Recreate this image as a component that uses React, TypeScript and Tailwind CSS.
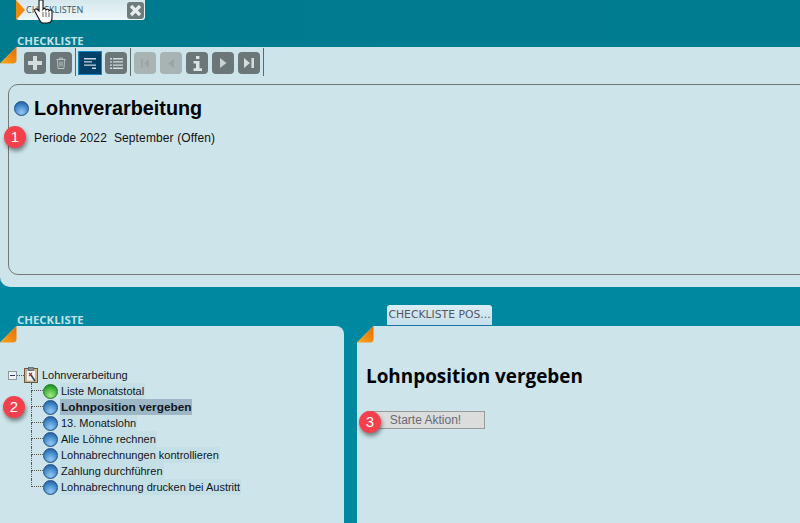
import type { ReactNode } from 'react';

const treeItems = [
  { label: 'Liste Monatstotal', color: 'green' },
  { label: 'Lohnposition vergeben', color: 'blue', selected: true },
  { label: '13. Monatslohn', color: 'blue' },
  { label: 'Alle Löhne rechnen', color: 'blue' },
  { label: 'Lohnabrechnungen kontrollieren', color: 'blue' },
  { label: 'Zahlung durchführen', color: 'blue' },
  { label: 'Lohnabrechnung drucken bei Austritt', color: 'blue' },
];

function Corner({ fold }: { fold: string }) {
  return (
    <svg className="absolute left-0 top-0" width="17" height="17" viewBox="0 0 17 17">
      <defs>
        <linearGradient id="cornerFill" x1="0" y1="1" x2="1" y2="0">
          <stop offset="0" stopColor="#f9a81f" />
          <stop offset="1" stopColor="#e86a00" />
        </linearGradient>
      </defs>
      <path d="M0 0 L16.5 0 L0 16.5 Z" fill={fold} />
      <path d="M16.5 0 L16.5 13 Q16.5 16.5 13 16.5 L0 16.5 Z" fill="url(#cornerFill)" />
    </svg>
  );
}

function Badge({ n, className }: { n: number; className: string }) {
  return (
    <div
      className={`absolute flex h-[22px] w-[22px] items-center justify-center rounded-full bg-[#f4404c] text-[15px] text-white shadow-[1px_3px_4px_rgba(0,0,0,0.45)] ${className}`}
    >
      {n}
    </div>
  );
}

function Globe({ color, size = 15 }: { color: string; size?: number }) {
  const cls =
    color === 'green'
      ? 'border-[#1f7a26] bg-[radial-gradient(circle_at_50%_80%,#a0ec84,#35ab35_65%,#187524)]'
      : 'border-[#1f4f84] bg-[radial-gradient(circle_at_50%_80%,#92c9f5,#3c82c6_62%,#1b4e8e)]';
  return <div className={`shrink-0 rounded-full border ${cls}`} style={{ width: size, height: size }} />;
}

function ToolButton({ children, disabled }: { children: ReactNode; disabled?: boolean }) {
  const tone = disabled ? 'bg-[#a8b3b4]' : 'bg-[#6a7677]';
  return <div className={`flex h-[22px] w-[22px] items-center justify-center rounded-[4px] ${tone}`}>{children}</div>;
}

function Separator() {
  return <div className="h-[28px] w-px bg-[#5d6a6c]" />;
}

function Toolbar() {
  return (
    <div className="flex h-[30px] items-center pl-[24px]">
      <div className="mt-[2px] flex gap-[4px]">
        <ToolButton>
          <svg width="16" height="16" viewBox="0 0 16 16"><path d="M6 1h4v5h5v4h-5v5H6v-5H1V6h5z" fill="#d4dcdc" /></svg>
        </ToolButton>
        <ToolButton>
          <svg width="10" height="12" viewBox="0 0 10 12" fill="none" stroke="#b9c3c3" strokeWidth="1">
            <path d="M0.5 2.5h9M3.5 2.5V1h3v1.5M1.5 2.5l.5 9h6l.5-9M4 4.5v5M6 4.5v5" />
          </svg>
        </ToolButton>
      </div>
      <div className="ml-[3px] mr-[2px]"><Separator /></div>
      <div className="mt-[2px] flex items-center gap-[3px]">
        <div className="flex h-[24px] w-[24px] items-center justify-center border border-[#0f86c4] bg-[#003f66]">
          <svg width="13" height="13" viewBox="0 0 13 13" fill="#c9d8de">
            <path d="M0 1h12v1.4H0zM0 4.2h8v1.4H0zM0 7.4h12v1.4H0zM8 10.6h4V12H8z" />
          </svg>
        </div>
        <ToolButton>
          <svg width="13" height="13" viewBox="0 0 13 13" fill="#d4dcdc">
            <path d="M0 1h2v1.4H0zM3 1h10v1.4H3zM0 4.2h2v1.4H0zM3 4.2h10v1.4H3zM0 7.4h2v1.4H0zM3 7.4h10v1.4H3zM0 10.6h2V12H0zM3 10.6h10V12H3z" />
          </svg>
        </ToolButton>
      </div>
      <div className="ml-[3px] mr-[3px]"><Separator /></div>
      <div className="mt-[2px] flex gap-[4px]">
        <ToolButton disabled>
          <svg width="8" height="9" viewBox="0 0 8 9" fill="#9aa5a6"><path d="M0 0h1.6v9H0zM8 0v9L3 4.5z" /></svg>
        </ToolButton>
        <ToolButton disabled>
          <svg width="6" height="9" viewBox="0 0 6 9" fill="#9aa5a6"><path d="M6 0v9L0 4.5z" /></svg>
        </ToolButton>
        <ToolButton>
          <svg width="11" height="15" viewBox="0 0 11 15" fill="#dde3e3"><path d="M4 0h3.4v3H4zM1.5 5h6v7.2H10V15H1.5v-2.8H4V7.6H1.5z" /></svg>
        </ToolButton>
        <ToolButton>
          <svg width="8" height="10" viewBox="0 0 8 10" fill="#c9d1d1"><path d="M1 0l6.5 5L1 10z" /></svg>
        </ToolButton>
        <ToolButton>
          <svg width="10" height="10" viewBox="0 0 10 10" fill="#d4dcdc"><path d="M0 0l6 5-6 5zM7.4 0H10v10H7.4z" /></svg>
        </ToolButton>
      </div>
      <div className="ml-[3px]"><Separator /></div>
    </div>
  );
}

function SectionLabel({ className = '' }: { className?: string }) {
  return (
    <div className={`pl-[17px] font-['Open_Sans',sans-serif] text-[11.4px] font-bold leading-[12px] text-[#bfe2ea] ${className}`}>
      CHECKLISTE
    </div>
  );
}

function ClipboardIcon() {
  return (
    <svg width="14" height="16" viewBox="0 0 14 16">
      <rect x="0.5" y="1.5" width="13" height="14" fill="#c9b48c" stroke="#6d5a3a" />
      <rect x="2.5" y="3.5" width="9" height="10.5" fill="#f5f3ee" stroke="#9a9a9a" strokeWidth="0.5" />
      <rect x="4.5" y="0.5" width="5" height="3" fill="#8a8f96" stroke="#4c4f55" strokeWidth="0.6" />
      <path d="M5 6l3 3M8 6l-3 3" stroke="#c0262c" strokeWidth="1.1" />
      <path d="M7 8l4 6" stroke="#3b4250" strokeWidth="1.6" />
    </svg>
  );
}

function TreeRow({ label, color, selected, last }: { label: string; color: string; selected?: boolean; last?: boolean }) {
  return (
    <div className="flex h-4 items-center pl-[31px]">
      <div className="flex h-full w-[12px] shrink-0 flex-col">
        <div className="h-[8px] border-b border-l border-dotted border-[#555]" />
        {!last && <div className="h-[8px] border-l border-dotted border-[#555]" />}
      </div>
      <Globe color={color} />
      <span
        className={`ml-[2px] whitespace-nowrap px-[1px] leading-[16px] text-[#10141c] ${
          selected ? 'bg-[#9db7c6] text-[11.8px] font-bold' : 'bg-[#c4e0e6] text-[11px]'
        }`}
      >
        {label}
      </span>
    </div>
  );
}

export default function App() {
  return (
    <div className="relative flex h-[523px] w-[800px] flex-col overflow-hidden bg-[#0088a0] font-['Liberation_Sans',sans-serif]">
      {/* Top band with tab */}
      <div className="h-[47px] bg-gradient-to-r from-[#007a8d] to-[#007c91]">
        <div className="relative ml-[16px] flex h-[20px] w-[129px] items-center rounded-b-[3px] bg-gradient-to-b from-[#d5e8ed] to-[#eef6f8] pl-[10px]">
          <div className="absolute left-0 top-0 h-0 w-0 border-y-[10px] border-l-[9px] border-y-transparent border-l-[#f08a0c]" />
          <span className="font-['Open_Sans',sans-serif] text-[9px] text-[#33586a]">CHECKLISTEN</span>
          <div className="ml-auto mr-[1px] flex h-[17px] w-[17px] items-center justify-center rounded-[3px] bg-[#6f7c7e]">
            <svg width="13" height="13" viewBox="0 0 13 13" stroke="#e7ecec" strokeWidth="3.2"><path d="M2 2l9 9M11 2l-9 9" /></svg>
          </div>
        </div>
        <SectionLabel className="mt-[15px]" />
      </div>

      {/* Top panel */}
      <div className="relative h-[240px] rounded-bl-[10px] bg-[#cde5ea]">
        <Corner fold="#007a8d" />
        <Toolbar />
        <div className="ml-[8px] mr-[-12px] mt-[7px] h-[191px] rounded-[10px] border border-[#777]">
          <div className="flex items-center gap-[5px] pl-[5px] pt-[12px]">
            <Globe color="blue" />
            <h1 className="text-[19.8px] font-bold leading-[23px] text-black">Lohnverarbeitung</h1>
          </div>
          <p className="whitespace-pre pl-[25px] pt-[11px] text-[12px] leading-[14px] tracking-[0.13px] text-[#111]">
            Periode 2022  September (Offen)
          </p>
        </div>
      </div>

      {/* Lower tab row */}
      <div className="flex h-[39px] items-end">
        <div className="w-[357px]"><SectionLabel /></div>
        <div className="ml-[30px] flex h-[21px] w-[105px] items-center justify-center whitespace-nowrap rounded-t-[3px] border-b border-[#1576a8] bg-gradient-to-b from-[#d9edf5] to-[#c6dfeb] font-['DejaVu_Sans',sans-serif] text-[10.8px] text-[#55565f]">
          CHECKLISTE POS...
        </div>
      </div>

      {/* Lower panels */}
      <div className="flex h-[197px] gap-[13px]">
        <div className="relative w-[344px] rounded-tr-[8px] bg-[#cde5ea] pt-[41px]">
          <Corner fold="#0088a0" />
          <div className="flex h-4 items-center pl-[8px]">
            <div className="flex h-[9px] w-[9px] items-center justify-center border border-[#8a96a0] bg-[#eef2f6]">
              <div className="h-px w-[5px] bg-[#333a66]" />
            </div>
            <div className="h-0 w-[7px] border-t border-dotted border-[#555]" />
            <ClipboardIcon />
            <span className="ml-[4px] text-[11px] leading-[16px] text-[#10141c]">Lohnverarbeitung</span>
          </div>
          {treeItems.map((item, i) => (
            <TreeRow key={item.label} {...item} last={i === treeItems.length - 1} />
          ))}
        </div>
        <div className="relative flex-1 bg-[#cde5ea] pl-[9px] pt-[40px]">
          <Corner fold="#0088a0" />
          <h2 className="whitespace-nowrap font-['Open_Sans',sans-serif] text-[18.9px] font-bold leading-[21px] text-black">Lohnposition vergeben</h2>
          <button className="mt-[24px] h-[18px] w-[119px] border border-[#9a9a9a] bg-[#dcdcdc] text-[12px] leading-[16px] text-[#666b75]">
            Starte Aktion!
          </button>
        </div>
      </div>

      <Badge n={1} className="left-[4px] top-[126px]" />
      <Badge n={2} className="left-[3px] top-[396px]" />
      <Badge n={3} className="left-[359px] top-[411px]" />

      {/* Mouse cursor */}
      <svg className="absolute left-[34px] top-0" width="20" height="24" viewBox="0 0 20 24">
        <path
          d="M5 0v11L3.5 9.5C2 8 0 9.5 1 11.5l4 7.5c1 2 2 4 4 4h4c3 0 5-2 5-5v-6.5c0-1.5-2.2-2-3-.8 0-1.6-2.2-2-3-.8 0-1.6-2.2-2-3-.7V0z"
          fill="#fff"
          stroke="#111"
          strokeWidth="1.1"
        />
        <path d="M9 12v5M12 12v5M15 12.5v4.5" stroke="#333" strokeWidth="0.8" fill="none" />
      </svg>
    </div>
  );
}
